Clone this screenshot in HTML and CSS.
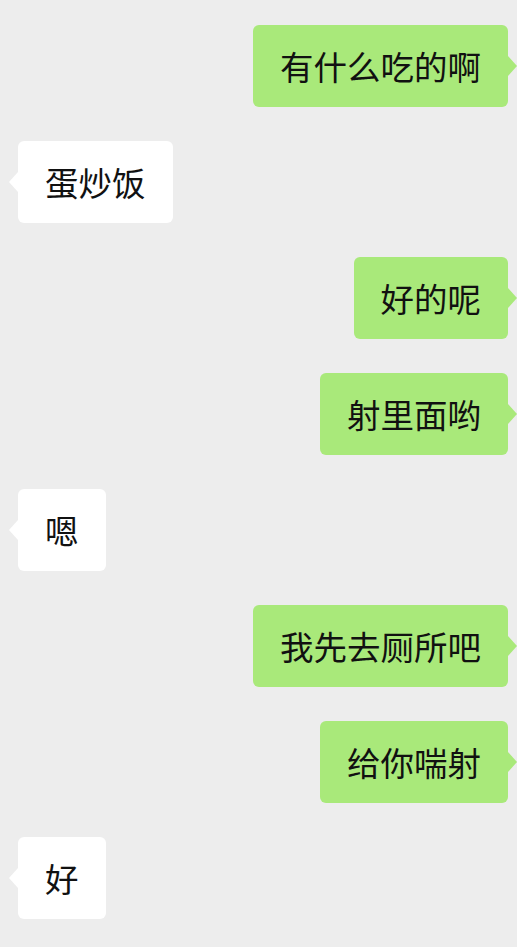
FILE: index.html
```html
<!DOCTYPE html>
<html lang="zh">
<head>
<meta charset="utf-8">
<link rel="stylesheet" href="styles.css">
</head>
<body>
<div class="chat">
  <div class="msg me"><div class="bubble">有什么吃的啊</div></div>
  <div class="msg them"><div class="bubble">蛋炒饭</div></div>
  <div class="msg me"><div class="bubble">好的呢</div></div>
  <div class="msg me"><div class="bubble">射里面哟</div></div>
  <div class="msg them"><div class="bubble">嗯</div></div>
  <div class="msg me"><div class="bubble">我先去厕所吧</div></div>
  <div class="msg me"><div class="bubble">给你喘射</div></div>
  <div class="msg them"><div class="bubble">好</div></div>
</div>
</body>
</html>
```
FILE: styles.css
```css
html, body {
  margin: 0;
  padding: 0;
  background: #ededed;
  height: 100%;
}
.chat {
  display: flex;
  flex-direction: column;
  gap: 34px;
  padding-top: 25px;
  font-family: "Noto Sans CJK SC", "Noto Sans", sans-serif;
}
.msg {
  display: flex;
}
.msg.me {
  justify-content: flex-end;
  padding-right: 9px;
}
.msg.them {
  justify-content: flex-start;
  padding-left: 18px;
}
.bubble {
  position: relative;
  font-size: 33.5px;
  line-height: 44px;
  padding: 19px 27px;
  border-radius: 6px;
  color: #111111;
  white-space: nowrap;
}
.me .bubble {
  background: #a9e97a;
}
.them .bubble {
  background: #ffffff;
}
.bubble::after {
  content: "";
  position: absolute;
  top: 31px;
  width: 0;
  height: 0;
  border-top: 10px solid transparent;
  border-bottom: 10px solid transparent;
}
.me .bubble::after {
  right: -9px;
  border-left: 9px solid #a9e97a;
}
.them .bubble::after {
  left: -9px;
  border-right: 9px solid #ffffff;
}
```
